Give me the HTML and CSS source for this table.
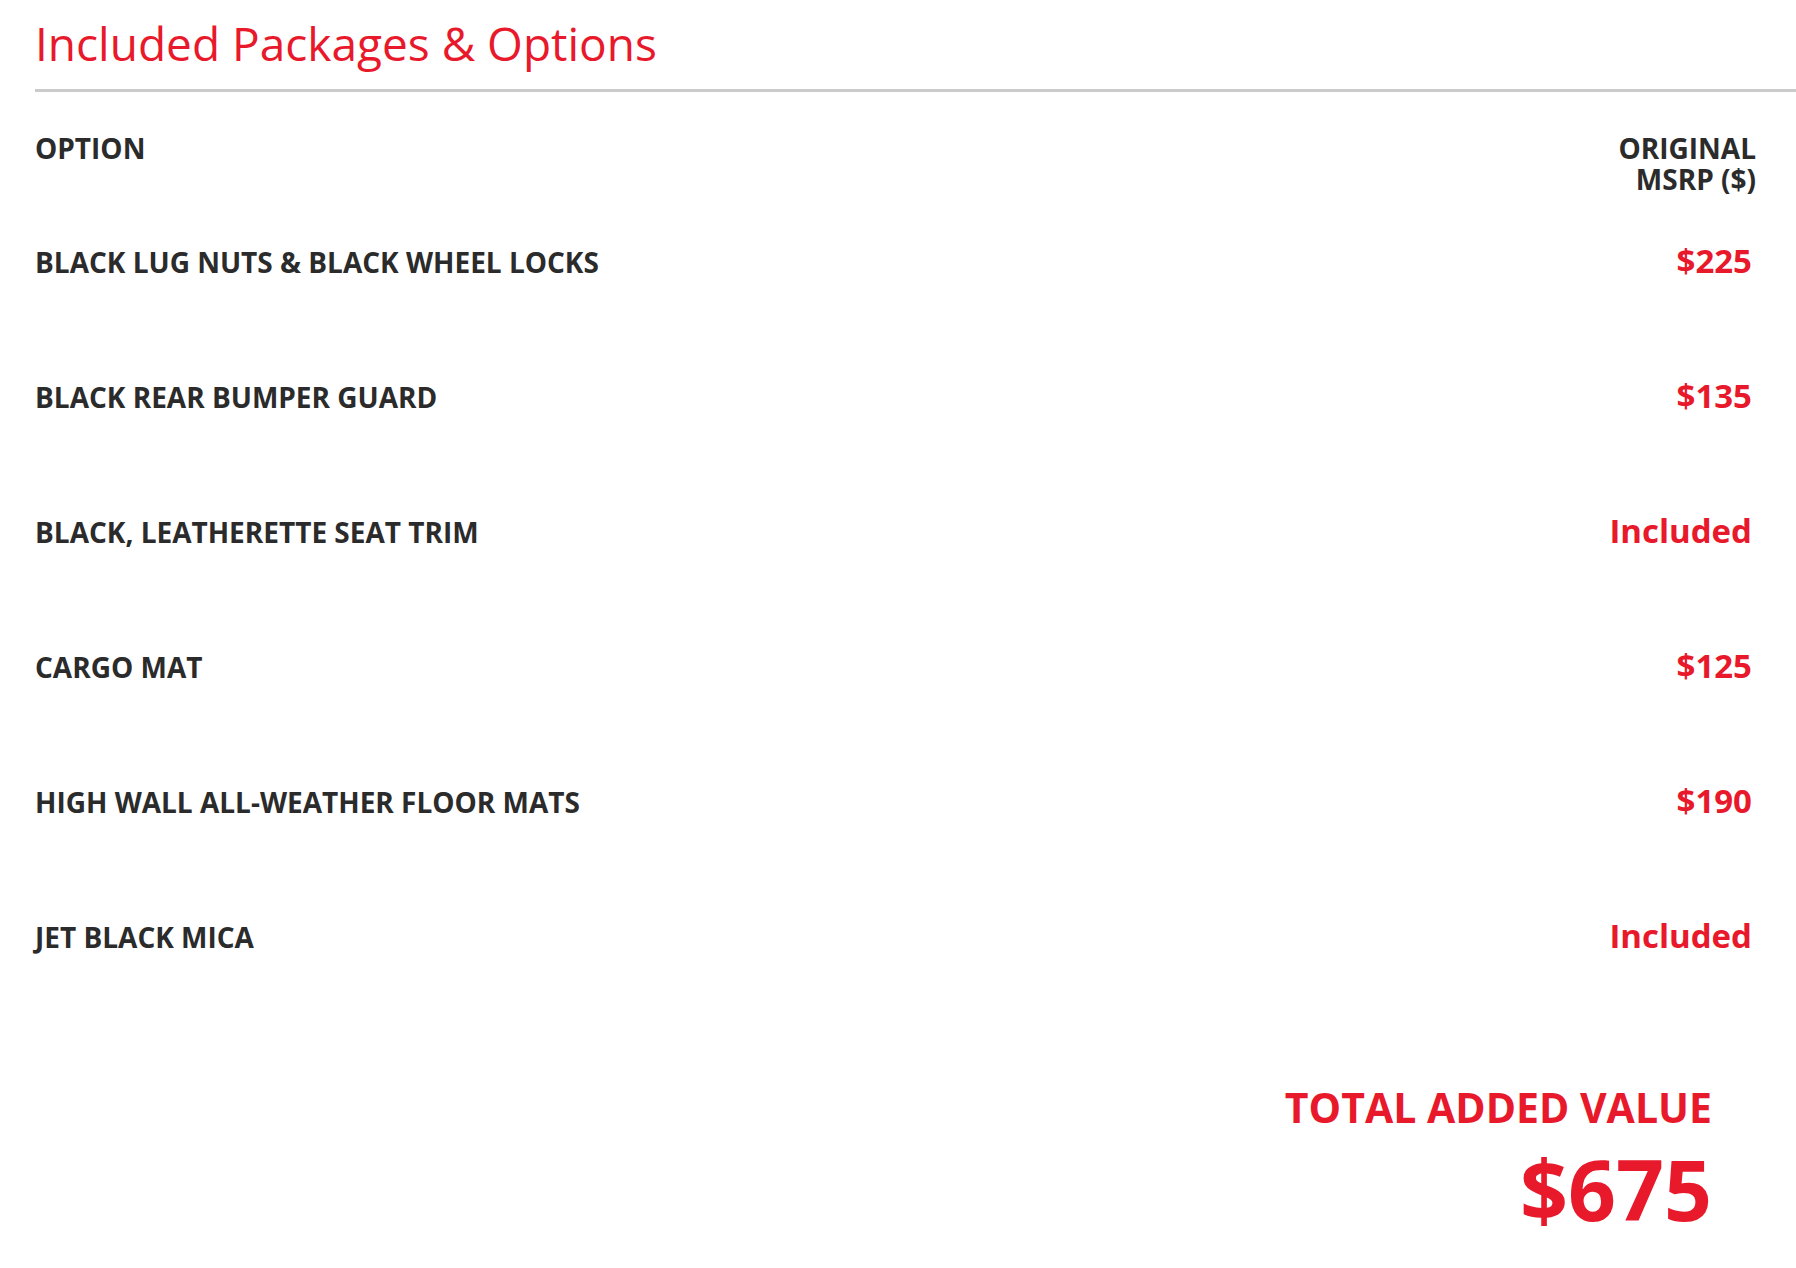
FILE: index.html
```html
<!DOCTYPE html>
<html lang="en">
<head>
    <meta charset="UTF-8">
    <meta name="viewport" content="width=device-width, initial-scale=1.0">
    <title>Included Packages &amp; Options</title>
    <link rel="stylesheet" href="styles.css">
</head>
<body>
    <div class="packages">
        <h1>Included Packages &amp; Options</h1>

        <div class="options-table">
            <div class="table-head">
                <div class="col-option">Option</div>
                <div class="col-msrp">Original MSRP ($)</div>
            </div>

            <div class="option-row">
                <div class="option-name">Black Lug Nuts &amp; Black Wheel Locks</div>
                <div class="option-price">$225</div>
            </div>
            <div class="option-row">
                <div class="option-name">Black Rear Bumper Guard</div>
                <div class="option-price">$135</div>
            </div>
            <div class="option-row">
                <div class="option-name">Black, Leatherette Seat Trim</div>
                <div class="option-price">Included</div>
            </div>
            <div class="option-row">
                <div class="option-name">Cargo Mat</div>
                <div class="option-price">$125</div>
            </div>
            <div class="option-row">
                <div class="option-name">High Wall All-Weather Floor Mats</div>
                <div class="option-price">$190</div>
            </div>
            <div class="option-row">
                <div class="option-name">Jet Black Mica</div>
                <div class="option-price">Included</div>
            </div>
        </div>

        <div class="total">
            <div class="total-label">Total Added Value</div>
            <div class="total-amount">$675</div>
        </div>
    </div>
</body>
</html>
```

FILE: styles.css
```css
body {
    font-family: 'Open Sans', 'Noto Sans', sans-serif;
    margin: 0;
    background-color: #fff;
    color: #2b2b2b;
}

.packages {
    padding: 16px 0 40px 35px;
}

h1 {
    margin: 0;
    padding-bottom: 18px;
    border-bottom: 3px solid #cbcbcb;
    color: #e8192b;
    font-size: 46px;
    font-weight: 400;
    line-height: 55px;
}

.options-table {
    padding-right: 44px;
}

.table-head {
    display: flex;
    justify-content: space-between;
    margin-top: 41px;
    font-size: 28px;
    font-weight: 700;
    line-height: 31px;
    text-transform: uppercase;
}

.col-msrp {
    width: 150px;
    margin-right: -4px;
    text-align: right;
}

.option-row {
    box-sizing: border-box;
    display: flex;
    justify-content: space-between;
    align-items: baseline;
    height: 135px;
    padding-top: 48px;
    line-height: 36px;
}

.option-name {
    font-size: 28px;
    font-weight: 700;
    text-transform: uppercase;
}

.option-price {
    color: #e8192b;
    font-size: 33px;
    font-weight: 700;
}

.total {
    margin-top: 78px;
    padding-right: 84px;
    text-align: right;
    color: #e8192b;
    font-weight: 700;
}

.total-label {
    font-size: 41px;
    line-height: 48px;
    text-transform: uppercase;
}

.total-amount {
    margin-top: 12px;
    font-size: 84px;
    line-height: 92px;
}
```
